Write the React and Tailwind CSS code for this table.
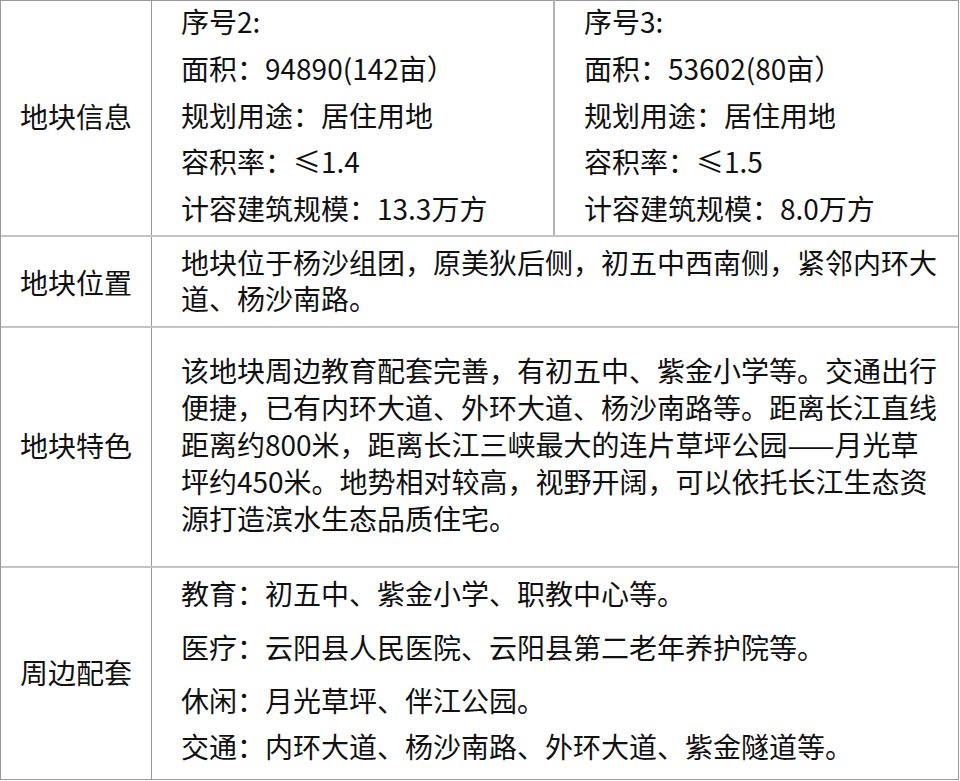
export default function App() {
  const font = { fontFamily: '"Noto Sans CJK SC", "Noto Sans", sans-serif' };
  return (
    <div className="w-[960px] h-[781px] bg-white text-[#111] text-[28px]" style={font}>
      <div className="w-[959px] h-[780px] border border-[#9a9a9a] flex flex-col">
        {/* Row 1 */}
        <div className="h-[236px] flex border-b-2 border-[#c4c4c4]">
          <div className="w-[151px] shrink-0 border-r border-[#9a9a9a] flex items-center justify-center pb-[4px]">
            地块信息
          </div>
          <div className="w-[403px] shrink-0 border-r-2 border-[#b4b4b4] pl-[29px] leading-[46.8px] -mt-[3px]">
            <p>序号2:</p>
            <p>面积：94890(142亩）</p>
            <p>规划用途：居住用地</p>
            <p>容积率：≤1.4</p>
            <p>计容建筑规模：13.3万方</p>
          </div>
          <div className="flex-1 pl-[29px] leading-[46.8px] -mt-[3px]">
            <p>序号3:</p>
            <p>面积：53602(80亩）</p>
            <p>规划用途：居住用地</p>
            <p>容积率：≤1.5</p>
            <p>计容建筑规模：8.0万方</p>
          </div>
        </div>
        {/* Row 2 */}
        <div className="h-[91px] flex border-b-2 border-[#c4c4c4]">
          <div className="w-[151px] shrink-0 border-r border-[#9a9a9a] flex items-center justify-center">
            地块位置
          </div>
          <div className="flex-1 pl-[29px] pr-[12px] leading-[36px] flex items-center pb-[3px]">
            <p>地块位于杨沙组团，原美狄后侧，初五中西南侧，紧邻内环大道、杨沙南路。</p>
          </div>
        </div>
        {/* Row 3 */}
        <div className="h-[240px] flex border-b-2 border-[#c4c4c4]">
          <div className="w-[151px] shrink-0 border-r border-[#9a9a9a] flex items-center justify-center pb-[4px]">
            地块特色
          </div>
          <div className="flex-1 pl-[29px] pr-[12px] leading-[37px] flex items-center pb-[6px]">
            <p>该地块周边教育配套完善，有初五中、紫金小学等。交通出行便捷，已有内环大道、外环大道、杨沙南路等。距离长江直线距离约800米，距离长江三峡最大的连片草坪公园——月光草坪约450米。地势相对较高，视野开阔，可以依托长江生态资源打造滨水生态品质住宅。</p>
          </div>
        </div>
        {/* Row 4 */}
        <div className="flex-1 flex">
          <div className="w-[151px] shrink-0 border-r border-[#9a9a9a] flex items-center justify-center pb-[4px]">
            周边配套
          </div>
          <div className="flex-1 pl-[29px] pr-[12px] flex flex-col justify-center pb-[8px]">
            <p className="leading-[46px] mb-[8px]">教育：初五中、紫金小学、职教中心等。</p>
            <p className="leading-[46px] mb-[7px]">医疗：云阳县人民医院、云阳县第二老年养护院等。</p>
            <p className="leading-[46px]">休闲：月光草坪、伴江公园。</p>
            <p className="leading-[46px]">交通：内环大道、杨沙南路、外环大道、紫金隧道等。</p>
          </div>
        </div>
      </div>
    </div>
  );
}
